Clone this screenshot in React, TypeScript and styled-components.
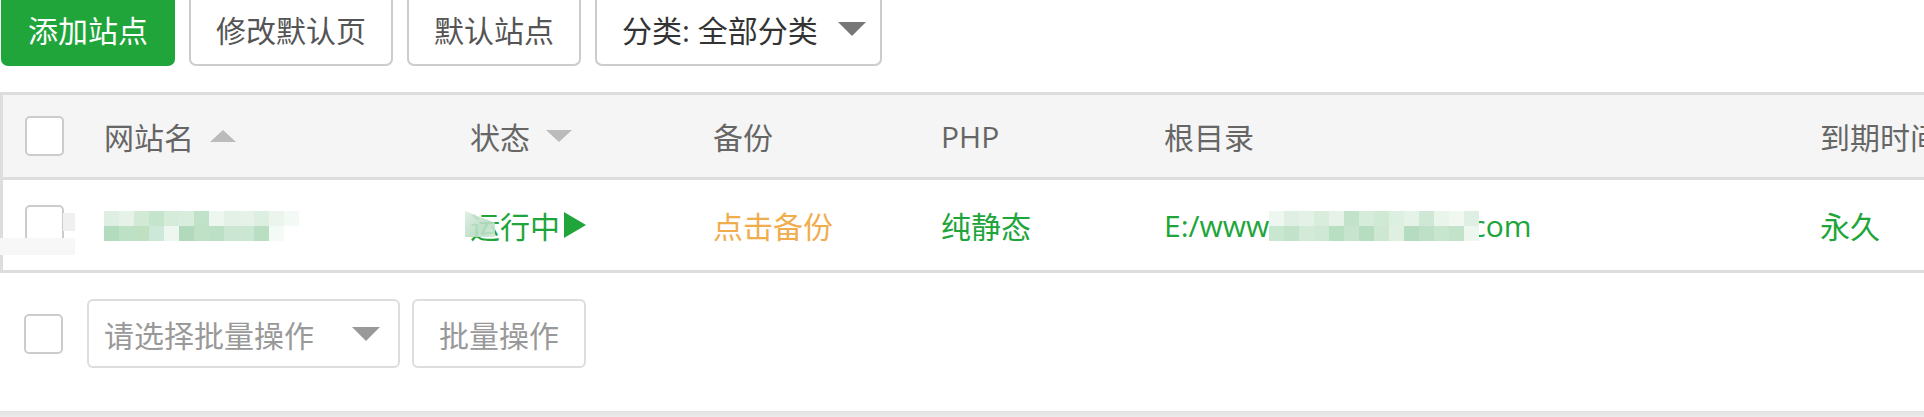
import React from "react";
import styled, { createGlobalStyle } from "styled-components";

const GlobalStyle = createGlobalStyle`
    html, body {
        margin: 0;
        padding: 0;
        background: #fff;
        overflow: hidden;
    }
    body {
        font-family: "Open Sans", "Noto Sans CJK SC", sans-serif;
        font-size: 30px;
        color: #666;
    }
`;

const nameTop = ["#dfeee2", "#e6f2e8", "#d2e9d6", "#c4e4cc", "#d6ecda", "#d9edde", "#bfe2c8", "#edf6ef", "#e3f1e6", "#e6f2e8", "#dcefe0", "#ebf5ed", "#f3f9f4"];
const nameBottom = ["#b3dcbe", "#bce1c5", "#c0e0c2", "#cbe8d9", "#eef6f0", "#b1dabc", "#bfe1c6", "#bbe0c6", "#cbe6d2", "#cbe6d2", "#b9dec1", "#f4faf5", "#ffffff"];
const pathTop = ["#eef6f0", "#e0efe3", "#e3f1e6", "#d9eddd", "#e6f2e8", "#c2e3ca", "#d6ecda", "#d0e9d5", "#dcefe0", "#e5f2e7", "#cfe8d5", "#e9f4eb", "#f1f8f2", "#e0efe3"];
const pathBottom = ["#c9e6d0", "#c2e3ca", "#d3ead8", "#cfe8d5", "#b9dfc3", "#c7e5ce", "#b7ddc1", "#cde7d3", "#dff0e3", "#b5dcc0", "#bde0c6", "#c8e6cf", "#c2e3ca", "#eef6f0"];

const App = () => {
    return (
        <>
            <GlobalStyle />
            <Page>
                <Toolbar>
                    <Button $primary>添加站点</Button>
                    <Button>修改默认页</Button>
                    <Button>默认站点</Button>
                    <Dropdown>
                        分类: 全部分类
                        <Caret $size={14} $color="#777" />
                    </Dropdown>
                </Toolbar>

                <Table>
                    <HeadRow>
                        <Cell $first><CheckBox /></Cell>
                        <Cell>网站名<SortUp /></Cell>
                        <Cell>状态<SortDown /></Cell>
                        <Cell>备份</Cell>
                        <Cell>PHP</Cell>
                        <Cell>根目录</Cell>
                        <Cell>到期时间</Cell>
                    </HeadRow>
                    <BodyRow>
                        <Cell $first>
                            <CheckBox />
                            <GreyBlur />
                        </Cell>
                        <Cell>
                            <Mosaic>
                                <MosaicRow>{nameTop.map((c, i) => <Tile key={i} style={{ background: c }} />)}</MosaicRow>
                                <MosaicRow>{nameBottom.map((c, i) => <Tile key={i} style={{ background: c }} />)}</MosaicRow>
                            </Mosaic>
                        </Cell>
                        <Cell $color="#20a53a">
                            <StatusBlur />
                            运行中<RunArrow />
                        </Cell>
                        <Cell $color="#f0ad4e">点击备份</Cell>
                        <Cell $color="#20a53a">纯静态</Cell>
                        <Cell $color="#20a53a">
                            E:/www
                            <Mosaic $overlap>
                                <MosaicRow>{pathTop.map((c, i) => <Tile key={i} style={{ background: c }} />)}</MosaicRow>
                                <MosaicRow>{pathBottom.map((c, i) => <Tile key={i} style={{ background: c }} />)}</MosaicRow>
                            </Mosaic>
                            com
                        </Cell>
                        <Cell $color="#20a53a">永久</Cell>
                    </BodyRow>
                </Table>

                <Footer>
                    <CheckBox />
                    <BatchSelect>
                        请选择批量操作
                        <Caret $size={14} $color="#999" />
                    </BatchSelect>
                    <BatchButton>批量操作</BatchButton>
                </Footer>
                <BottomEdge />
            </Page>
        </>
    );
};

const Page = styled.div`
    width: 1924px;
    height: 417px;
    overflow: hidden;
`;
const Toolbar = styled.div`
    display: flex;
    gap: 14px;
    margin-top: -9px;
    padding-left: 1px;
`;
const Button = styled.div<{ $primary?: boolean }>`
    box-sizing: border-box;
    height: 75px;
    display: flex;
    align-items: center;
    padding: 0 25px;
    border: 2px solid ${p => p.$primary ? "#20a53a" : "#ccc"};
    border-radius: 7px;
    background: ${p => p.$primary ? "#20a53a" : "#fff"};
    color: ${p => p.$primary ? "#fff" : "#555"};
    font-size: 30px;
    white-space: nowrap;
`;
const Dropdown = styled(Button)`
    width: 287px;
    justify-content: space-between;
    padding: 0 14px 0 25px;
    color: #333;
`;
const Caret = styled.span<{ $size: number, $color: string }>`
    display: inline-block;
    width: 0;
    height: 0;
    border-left: ${p => p.$size}px solid transparent;
    border-right: ${p => p.$size}px solid transparent;
    border-top: ${p => p.$size}px solid ${p => p.$color};
`;
const SortUp = styled.span`
    display: inline-block;
    margin-left: 16px;
    width: 0;
    height: 0;
    border-left: 13px solid transparent;
    border-right: 13px solid transparent;
    border-bottom: 12px solid #bbb;
`;
const SortDown = styled(SortUp)`
    border-bottom: none;
    border-top: 12px solid #bbb;
`;
const RunArrow = styled.span`
    display: inline-block;
    margin-left: 4px;
    width: 0;
    height: 0;
    border-top: 13px solid transparent;
    border-bottom: 13px solid transparent;
    border-left: 22px solid #20a53a;
`;
const Table = styled.div`
    margin-top: 26px;
    width: 2300px;
    border: 3px solid #ddd;
`;
const rowGrid = `
    display: grid;
    grid-template-columns: 76px 366px 243px 228px 223px 656px 1fr;
    align-items: center;
`;
const HeadRow = styled.div`
    ${rowGrid};
    height: 82px;
    background: #f5f5f5;
    border-bottom: 3px solid #ddd;
    color: #666;
`;
const BodyRow = styled.div`
    ${rowGrid};
    height: 90px;
`;
const Cell = styled.div<{ $first?: boolean, $color?: string }>`
    position: relative;
    display: flex;
    align-items: center;
    padding-left: ${p => p.$first ? 22 : 25}px;
    color: ${p => p.$color || "inherit"};
    white-space: nowrap;
`;
const CheckBox = styled.div`
    box-sizing: border-box;
    width: 39px;
    height: 40px;
    border: 2px solid #ccc;
    border-radius: 5px;
    background: #fff;
`;
const Mosaic = styled.div<{ $overlap?: boolean }>`
    display: flex;
    flex-direction: column;
    margin-top: 2px;
    margin-right: ${p => p.$overlap ? -8 : 0}px;
    position: relative;
`;
const MosaicRow = styled.div`
    display: flex;
`;
const Tile = styled.div`
    width: 15px;
    height: 15px;
`;
const GreyBlur = styled.div`
    position: absolute;
    left: -3px;
    top: 33px;
    width: 75px;
    height: 17px;
    background: #f7f7f7;
    &::after {
        content: "";
        position: absolute;
        left: 63px;
        top: -25px;
        width: 12px;
        height: 18px;
        background: #f0f0f0;
    }
`;
const StatusBlur = styled.div`
    position: absolute;
    left: 20px;
    top: 8px;
    width: 30px;
    height: 26px;
    background: linear-gradient(135deg, #dcede0 0%, #b9dcc4 60%, #cde7d4 100%);
    clip-path: polygon(0 0, 100% 45%, 100% 100%, 0 100%);
    opacity: 0.9;
`;
const Footer = styled.div`
    display: flex;
    align-items: center;
    gap: 24px;
    height: 69px;
    padding: 26px 0 0 24px;
`;
const BatchSelect = styled.div`
    box-sizing: border-box;
    width: 313px;
    height: 69px;
    display: flex;
    align-items: center;
    justify-content: space-between;
    padding: 0 18px 0 15px;
    border: 2px solid #ddd;
    border-radius: 6px;
    color: #999;
`;
const BatchButton = styled.div`
    box-sizing: border-box;
    height: 69px;
    margin-left: -12px;
    display: flex;
    align-items: center;
    padding: 0 25px;
    border: 2px solid #ddd;
    border-radius: 6px;
    color: #999;
`;
const BottomEdge = styled.div`
    margin-top: 43px;
    height: 6px;
    background: linear-gradient(#e2e2e2, #ececec);
`;

export default App;
